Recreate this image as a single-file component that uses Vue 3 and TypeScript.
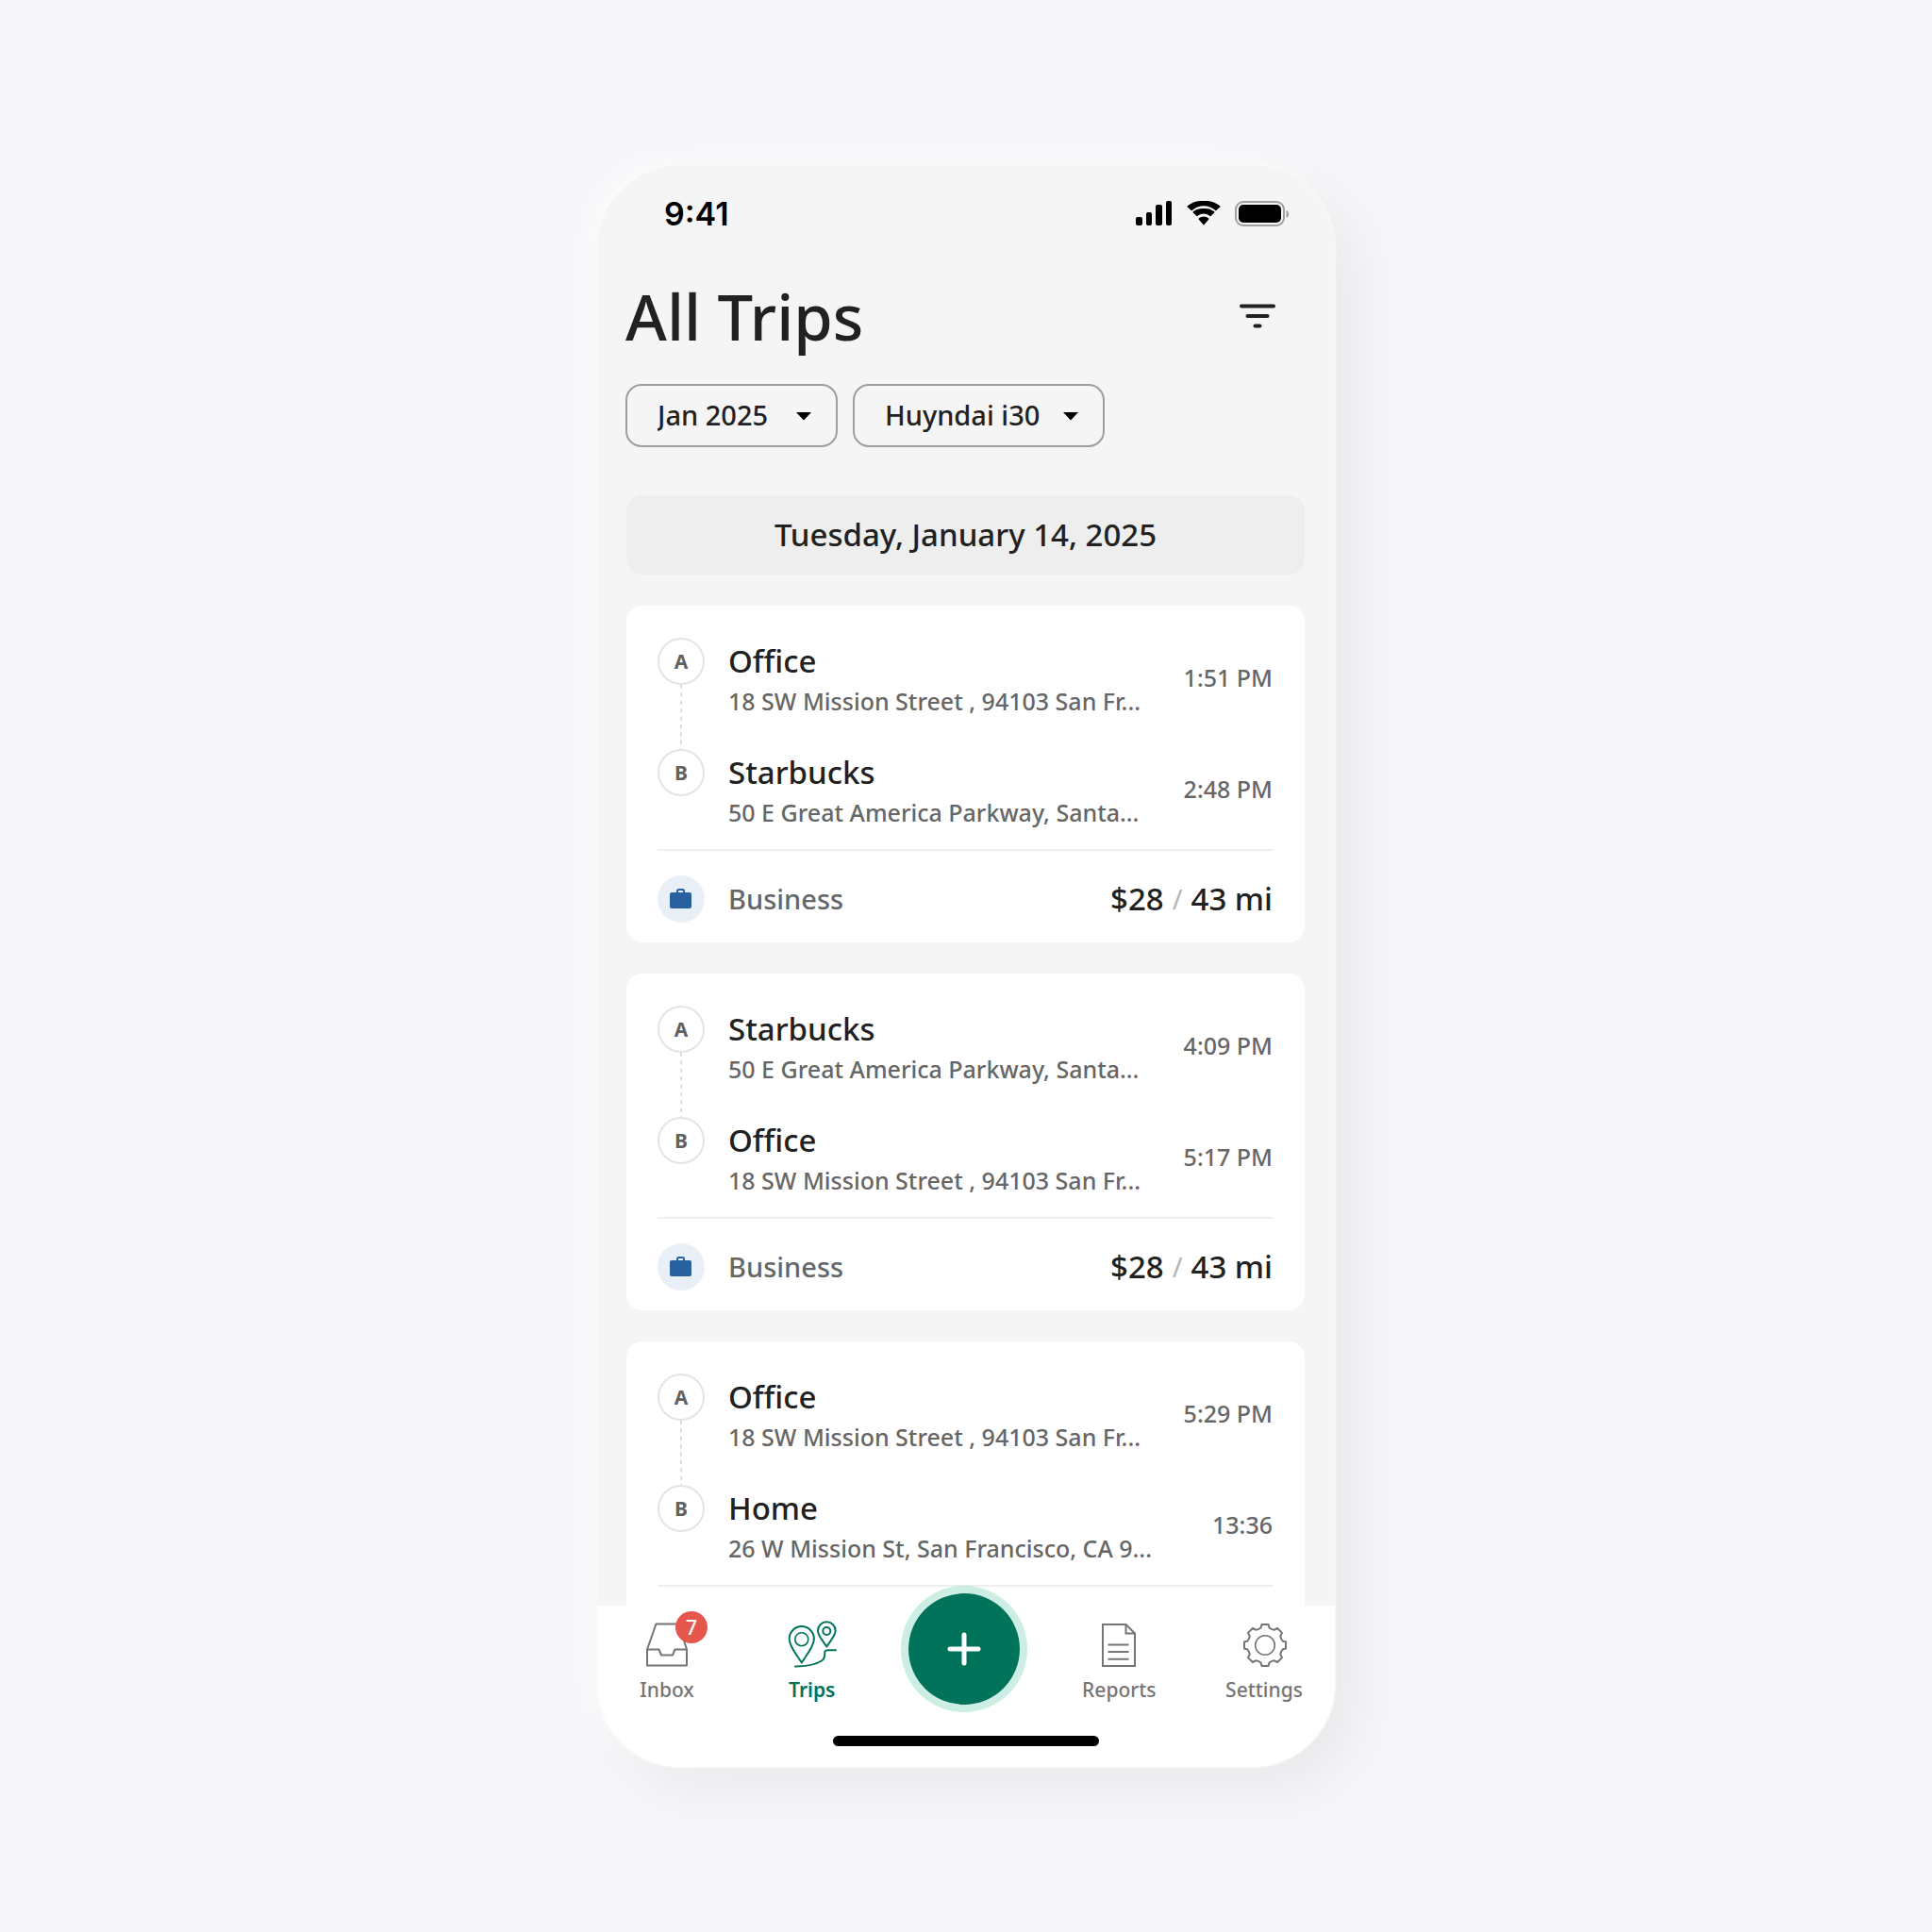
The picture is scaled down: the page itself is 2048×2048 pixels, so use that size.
<script setup lang="ts">
import { ref } from 'vue'

interface Stop {
  name: string
  address: string
  time: string
}

interface Trip {
  id: number
  stops: Stop[]
  summary?: { category: string; cost: string; distance: string }
}

const office = { name: 'Office', address: '18 SW Mission Street , 94103 San Fr...' }
const starbucks = { name: 'Starbucks', address: '50 E Great America Parkway, Santa...' }
const home = { name: 'Home', address: '26 W Mission St, San Francisco, CA 9...' }
const business = { category: 'Business', cost: '$28', distance: '43 mi' }

const trips: Trip[] = [
  { id: 1, stops: [{ ...office, time: '1:51 PM' }, { ...starbucks, time: '2:48 PM' }], summary: business },
  { id: 2, stops: [{ ...starbucks, time: '4:09 PM' }, { ...office, time: '5:17 PM' }], summary: business },
  { id: 3, stops: [{ ...office, time: '5:29 PM' }, { ...home, time: '13:36' }] },
]

const markers = ['A', 'B']
const month = ref('Jan 2025')
const vehicle = ref('Huyndai i30')
</script>

<template>
  <main class="page">
    <div class="phone">
      <div class="status">
        <span class="clock">9:41</span>
        <div class="indicators">
          <svg width="39" height="26" viewBox="0 0 39 26">
            <rect x="0" y="17" width="7" height="9" rx="2" />
            <rect x="11" y="12" width="6" height="14" rx="2" />
            <rect x="21" y="4" width="7" height="22" rx="2" />
            <rect x="32" y="0" width="6" height="26" rx="2" />
          </svg>
          <svg width="36" height="26" viewBox="0 0 36 26">
            <path d="M18 5.200c4.700 0 9 1.800 12.300 4.900.3.300.7.300 1 0l3.900-3.700c.3-.3.3-.8 0-1.100A25 25 0 0 0 18 0 25 25 0 0 0 .8 5.300c-.3.300-.3.800 0 1.100l3.900 3.700c.3.300.7.300 1 0A17.900 17.900 0 0 1 18 5.200z" />
            <path d="M18 13.400c2.400 0 4.700.9 6.500 2.500.3.300.7.300 1 0l3.700-3.500c.3-.3.3-.8 0-1.100A16.500 16.500 0 0 0 18 8 16.500 16.500 0 0 0 6.800 11.300c-.3.300-.3.800 0 1.100l3.700 3.500c.3.300.7.300 1 0A9.700 9.700 0 0 1 18 13.400z" />
            <path d="M23.300 19.600c.3-.3.3-.8 0-1.100a8.400 8.400 0 0 0-10.600 0c-.3.300-.3.800 0 1.100l4.700 5.400c.3.400.9.400 1.200 0z" />
          </svg>
          <svg width="58" height="27" viewBox="0 0 58 27">
            <rect x="1" y="1" width="51" height="25" rx="8" fill="none" stroke="#a0a0a0" stroke-width="2" />
            <rect x="4" y="4" width="45" height="19" rx="5" />
            <path d="M54.500 10v8c1.600-.6 2.600-2.200 2.600-4s-1-3.400-2.600-4z" fill="#a0a0a0" />
          </svg>
        </div>
      </div>

      <header class="header">
        <h1>All Trips</h1>
        <button class="filter" type="button" aria-label="Filter">
          <svg width="38" height="26" viewBox="0 0 38 26" stroke="#212121" stroke-width="4" stroke-linecap="round">
            <path d="M2 2.500h34M8.500 13h21M16.500 23.500h5" />
          </svg>
        </button>
      </header>

      <div class="chips">
        <label class="chip">
          <select v-model="month" aria-label="Month">
            <option>Jan 2025</option>
          </select>
          <svg class="caret" width="16" height="9" viewBox="0 0 16 9"><path d="M0 0h16L8 8.500z" /></svg>
        </label>
        <label class="chip">
          <select v-model="vehicle" aria-label="Vehicle">
            <option>Huyndai i30</option>
          </select>
          <svg class="caret" width="16" height="9" viewBox="0 0 16 9"><path d="M0 0h16L8 8.500z" /></svg>
        </label>
      </div>

      <section class="list">
        <h2 class="date">Tuesday, January 14, 2025</h2>
        <article v-for="trip in trips" :key="trip.id" class="card">
          <ol class="stops">
            <li v-for="(stop, i) in trip.stops" :key="i" class="stop">
              <div class="rail">
                <span class="marker">{{ markers[i] }}</span>
                <svg v-if="i < trip.stops.length - 1" class="dashes" width="2" height="68">
                  <path d="M1 0v68" stroke="#dcdcdc" stroke-width="2" stroke-dasharray="4 4.400" />
                </svg>
              </div>
              <div class="place">
                <h3>{{ stop.name }}</h3>
                <p>{{ stop.address }}</p>
              </div>
              <time>{{ stop.time }}</time>
            </li>
          </ol>
          <footer v-if="trip.summary" class="summary">
            <span class="tag">
              <svg width="24" height="22" viewBox="0 0 24 22">
                <rect x="0" y="4" width="23" height="17" rx="2" fill="#2960a0" />
                <path d="M8 5V2.500a1.500 1.500 0 0 1 1.500-1.500h4a1.500 1.500 0 0 1 1.500 1.500V5" fill="none" stroke="#2960a0" stroke-width="2" />
              </svg>
            </span>
            <span class="category">{{ trip.summary.category }}</span>
            <span class="totals">
              <span>{{ trip.summary.cost }}</span>
              <span class="slash">/</span>
              <span>{{ trip.summary.distance }}</span>
            </span>
          </footer>
        </article>
      </section>

      <div class="dock">
        <nav class="tabs">
          <a class="tab" href="#inbox">
            <span class="glyph">
              <svg width="52" height="52" viewBox="0 0 52 52" fill="none" stroke="#757575" stroke-width="2">
                <path d="M5 31.500 14.500 4.500H38.500L47 31.500" />
                <path d="M5 31.500H17.500L20 37.500H32L34.500 31.500H47V48.500H5z" stroke-linejoin="round" />
              </svg>
              <span class="badge">7</span>
            </span>
            <span>Inbox</span>
          </a>
          <a class="tab active" href="#trips">
            <span class="glyph">
              <svg width="52" height="52" viewBox="0 0 52 52" fill="none" stroke="#00735a" stroke-width="2">
                <path d="M14.800 45.500C10.500 38.500 1.700 28.500 1.700 20.200a13.100 13.100 0 0 1 26.200 0C27.900 28.500 19.100 38.500 14.800 45.500z" stroke-linejoin="round" />
                <circle cx="14.800" cy="20.700" r="7" stroke-width="1.600" />
                <path d="M41.300 28.500C38.500 23.500 32 17.500 32 11.500a9.300 9.300 0 0 1 18.600 0C50.600 17.500 44.100 23.500 41.300 28.500z" stroke-linejoin="round" />
                <circle cx="41.300" cy="12" r="4" />
                <path d="M8 49.500C19 49.500 29 48 36 43.500C41 40 38.500 36 39.500 33.500C40.200 32 42 32.200 44 32.200H51" stroke-linecap="round" />
              </svg>
            </span>
            <span>Trips</span>
          </a>
          <button class="add" type="button" aria-label="Add trip">
            <svg width="36" height="36" viewBox="0 0 36 36" stroke="#fff" stroke-width="5" stroke-linecap="round">
              <path d="M18 3v30M3 18h30" />
            </svg>
          </button>
          <a class="tab" href="#reports">
            <span class="glyph">
              <svg width="52" height="52" viewBox="0 0 52 52" fill="none" stroke="#757575" stroke-width="2">
                <path d="M9 5H33.500L43 14.500V49H9z" />
                <path d="M33.500 5V14.500H43" />
                <path d="M14.500 26.500H36.500M14.500 34H36.500M14.500 41.700H36.500" />
              </svg>
            </span>
            <span>Reports</span>
          </a>
          <a class="tab" href="#settings">
            <span class="glyph">
              <svg width="52" height="52" viewBox="-27 -27 52 52" fill="none" stroke="#757575" stroke-width="2">
                <path d="M-3.500 -22L3.500 -22L4.500 -18.500Q7 -16.500 9.900 -16.300L13.100 -18L18 -13.100L16.300 -9.900Q16.500 -7 18.500 -4.500L22 -3.500L22 3.500L18.500 4.500Q16.500 7 16.300 9.900L18 13.100L13.100 18L9.900 16.300Q7 16.500 4.500 18.500L3.500 22L-3.500 22L-4.500 18.500Q-7 16.500 -9.900 16.300L-13.100 18L-18 13.100L-16.300 9.900Q-16.500 7 -18.500 4.500L-22 3.500L-22 -3.500L-18.500 -4.500Q-16.500 -7 -16.300 -9.900L-18 -13.100L-13.100 -18L-9.900 -16.300Q-7 -16.500 -4.500 -18.500Z" stroke-linejoin="round" />
                <circle r="10.300" stroke-width="1.600" />
              </svg>
            </span>
            <span>Settings</span>
          </a>
        </nav>
        <div class="home-bar"></div>
      </div>
    </div>
  </main>
</template>

<style>
body {
  margin: 0;
  background: #f6f6f9;
}
</style>

<style scoped>
* {
  box-sizing: border-box;
}

h1,
h2,
h3,
p,
ol {
  margin: 0;
  padding: 0;
  font-weight: 500;
}

button,
select {
  font: inherit;
  color: inherit;
}

.page {
  display: flex;
  align-items: center;
  justify-content: center;
  min-height: 100vh;
  font-family: 'Noto Sans', 'Open Sans', sans-serif;
  font-weight: 500;
  color: #212121;
}

.phone {
  display: flex;
  flex-direction: column;
  width: 100%;
  max-width: 782px;
  aspect-ratio: 782 / 1698;
  overflow: hidden;
  border-radius: 88px;
  background: #f5f5f5;
  box-shadow:
    0 0 2px 1px #fbfbfc,
    24px 24px 50px rgba(20, 20, 20, 0.05),
    -12px -8px 36px rgba(255, 255, 255, 0.6);
}

.status {
  display: flex;
  align-items: center;
  justify-content: space-between;
  flex-shrink: 0;
  height: 40px;
  margin-top: 31px;
  padding: 0 48px 0 71px;
}

.clock {
  padding-top: 2px;
  font-family: Inter, sans-serif;
  font-size: 34px;
  font-weight: 600;
  line-height: 42px;
  color: #000;
}

.indicators {
  display: flex;
  align-items: center;
  gap: 15px;
}

.header {
  display: flex;
  align-items: center;
  justify-content: space-between;
  margin-top: 49px;
  padding: 0 63px 0 30px;
}

h1 {
  font-size: 67px;
  line-height: 80px;
}

.filter {
  display: flex;
  padding: 0;
  border: 0;
  background: none;
}

.chips {
  display: flex;
  gap: 16px;
  margin-top: 32px;
  padding: 0 30px;
}

.chip {
  position: relative;
  display: flex;
}

select {
  min-width: 225px;
  height: 67px;
  padding: 0 66px 2px 32px;
  appearance: none;
  border: 2px solid #9e9e9e;
  border-radius: 17px;
  background: none;
  font-size: 29px;
  line-height: 40px;
}

.caret {
  position: absolute;
  right: 28px;
  top: 30px;
  pointer-events: none;
}

.list {
  display: flex;
  flex: 1;
  flex-direction: column;
  gap: 33px;
  min-height: 0;
  margin-top: 51px;
  padding: 0 32px 0 31px;
  overflow-y: auto;
  scrollbar-width: none;
}

.date {
  flex-shrink: 0;
  border-radius: 17px;
  background: #eee;
  font-size: 33px;
  line-height: 84px;
  text-align: center;
}

.card {
  flex-shrink: 0;
  min-height: 357px;
  padding: 34px 34px 0 33px;
  border-radius: 17px;
  background: #fff;
}

.stops {
  padding-bottom: 22px;
  border-bottom: 2px solid #eee;
  list-style: none;
}

.stop {
  display: flex;
  align-items: center;
}

.stop + .stop {
  margin-top: 34px;
}

.rail {
  position: relative;
  align-self: flex-start;
  width: 50px;
  margin-right: 25px;
}

.marker {
  display: block;
  width: 50px;
  height: 50px;
  border: 2px solid #e4e4e4;
  border-radius: 50%;
  font-size: 21px;
  font-weight: 700;
  line-height: 46px;
  text-align: center;
  color: #616161;
}

.dashes {
  position: absolute;
  left: 24px;
  top: 50px;
}

.place {
  flex: 1;
  min-width: 0;
  white-space: nowrap;
}

h3 {
  font-size: 33px;
  line-height: 50px;
}

p,
time {
  font-size: 25px;
  line-height: 34px;
  color: #666;
}

.summary {
  display: flex;
  align-items: center;
  padding: 26px 0 20px;
}

.tag {
  display: flex;
  align-items: center;
  justify-content: center;
  width: 50px;
  height: 50px;
  margin-right: 25px;
  border-radius: 50%;
  background: #e9eff6;
}

.category {
  flex: 1;
  font-size: 29px;
  line-height: 50px;
  color: #666;
}

.totals {
  display: flex;
  align-items: center;
  gap: 9px;
  font-size: 33px;
  line-height: 50px;
}

.slash {
  font-size: 29px;
  font-weight: 400;
  color: #b5b5b5;
}

.dock {
  position: relative;
  flex-shrink: 0;
  background: #fff;
}

.tabs {
  display: flex;
  align-items: flex-start;
  justify-content: space-between;
  padding: 0 15px 0 14px;
}

.tab {
  display: flex;
  flex-direction: column;
  align-items: center;
  gap: 8px;
  width: 120px;
  padding-top: 15px;
  font-size: 21px;
  line-height: 28px;
  color: #757575;
  text-decoration: none;
}

.tab.active {
  color: #00735a;
  font-weight: 600;
}

.glyph {
  position: relative;
  display: flex;
}

.badge {
  position: absolute;
  left: 35px;
  top: -9px;
  width: 34px;
  height: 34px;
  border-radius: 50%;
  background: #e5574d;
  font-size: 21px;
  line-height: 34px;
  text-align: center;
  color: #fff;
}

.add {
  display: flex;
  align-items: center;
  justify-content: center;
  width: 134px;
  height: 134px;
  margin: -21px 4px 0 0;
  padding: 0;
  border: 8px solid rgba(0, 170, 120, 0.2);
  border-radius: 50%;
  background: #00735a;
  background-clip: padding-box;
}

.home-bar {
  width: 36%;
  height: 11px;
  margin: 25px auto 22px;
  border-radius: 6px;
  background: #000;
}
</style>
